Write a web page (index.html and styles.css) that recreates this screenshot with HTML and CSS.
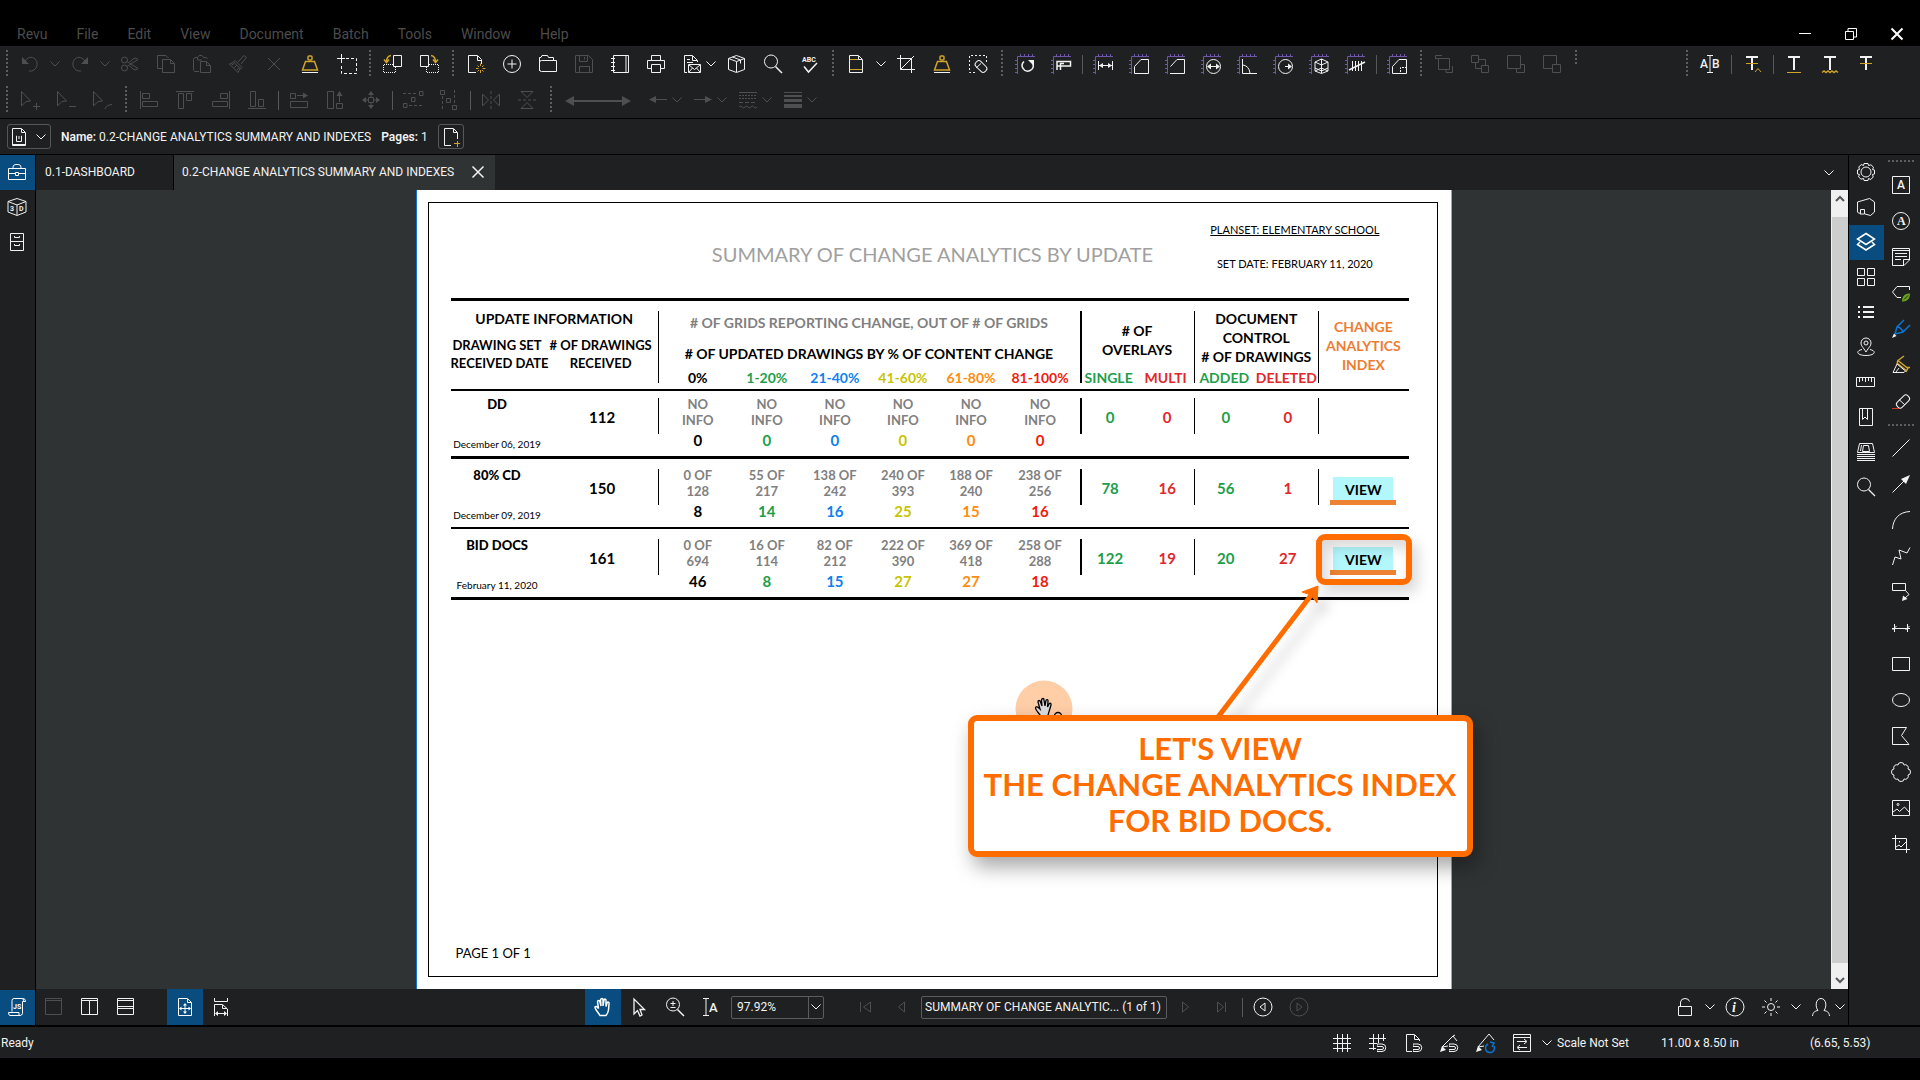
FILE: index.html
```html
<!DOCTYPE html>
<html lang="en">
<head>
<meta charset="utf-8">
<title>Revu - 0.2-CHANGE ANALYTICS SUMMARY AND INDEXES</title>
<link rel="stylesheet" href="styles.css">
</head>
<body>
<svg class="defs" aria-hidden="true">
  <symbol id="chev" viewBox="0 0 10 6"><path d="M.5.5 5 5 9.5.5"/></symbol>
  <symbol id="ruler" viewBox="0 0 20 20"><path d="M2.5 20V2.5H20M5.5 2V0M9.5 2V0M13.5 2V0M17.5 2V0M2 6.5H0M2 10.5H0M2 14.5H0M2 18.5H0"/></symbol>
  <symbol id="magnet" viewBox="0 0 10 10"><path d="M0 1H5A3.5 3.5 0 0 1 5 8.500H0V6.500H5A1.500 1.500 0 0 0 5 3.500H0Z"/></symbol>
</svg>
<div class="app">
  <header class="titlebar">
    <nav class="menu" aria-label="Main menu">
      <button>Revu</button><button>File</button><button>Edit</button><button>View</button><button>Document</button><button>Batch</button><button>Tools</button><button>Window</button><button>Help</button>
    </nav>
    <div class="window-buttons">
      <button aria-label="Minimize"><svg class="ic"><path d="M4 9.500H16"/></svg></button>
      <button aria-label="Restore"><svg class="ic"><path d="M4.500 7.500H12.500V15.500H4.500ZM7 7V4.500H15.500V13H13"/></svg></button>
      <button aria-label="Close"><svg class="ic thick"><path d="M4.500 4.500 15.500 15.500M15.500 4.500 4.500 15.500"/></svg></button>
    </div>
  </header>

  <div class="toolbars">
    <div class="toolbar" role="toolbar" aria-label="Standard">
      <i class="grip lead"></i>
      <button class="tb off" aria-label="Undo"><svg class="ic"><path d="M5 7.500C7 3 12 2 15 5S18 13 14 16Q12 17.500 9 17"/><path class="fill" d="M2 3V10H9Z"/></svg></button>
      <button class="chev off" aria-label="Undo history"><svg><use href="#chev"/></svg></button>
      <button class="tb off" aria-label="Redo"><svg class="ic"><path d="M15 7.500C13 3 8 2 5 5S2 13 6 16Q8 17.500 11 17"/><path class="fill" d="M18 3V10H11Z"/></svg></button>
      <button class="chev off" aria-label="Redo history"><svg><use href="#chev"/></svg></button>
      <button class="tb off" aria-label="Cut"><svg class="ic"><circle cx="4.500" cy="6" r="3"/><circle cx="4.500" cy="14" r="3"/><path d="M7 7.500 18 14.500Q16 17 13 15L10 12M7 12.500 18 5.500Q16 3 13 5L10 8"/></svg></button>
      <button class="tb off" aria-label="Copy"><svg class="ic"><path d="M6 14.500H1.500V1.500H10L12.500 4M6.500 5.500H14.500L18.500 9.500V18.500H6.500ZM14.500 6V9.500H18"/></svg></button>
      <button class="tb off" aria-label="Paste"><svg class="ic"><path d="M7 17.500H2.500Q1.500 17 1.500 15.500V5.500Q1.500 3.500 4 3.500H5.500L7 1.500H10L11.500 3.500H13Q15 3.500 15.500 5M5.500 3.500V6H10M8.500 7.500H14.500L18.500 11.500V18.500H8.500ZM14.500 8V11.500H18"/></svg></button>
      <button class="tb off" aria-label="Format painter"><svg class="ic"><path d="M10 8 16 1.500 18.500 3.500 13 10M7 6.500 14 13.500 12.500 15 5.500 8ZM5 8.500 1.500 10 10 18.500 12 15M4 11 6 9.500M6.500 13.500 9 11M9 16 11 13.500"/></svg></button>
      <button class="tb off" aria-label="Delete"><svg class="ic"><path d="M4 4 16 16M16 4 4 16"/></svg></button>
      <button class="tb" aria-label="Weight"><svg class="ic"><g class="gold"><path stroke-width="1.500" d="M5.500 7.500H14.500L17.500 16H2.500Z"/><rect x="8" y="2" width="4" height="4" rx="1" stroke-width="1.500"/></g><path d="M2 18.500H18"/></svg></button>
      <button class="tb" aria-label="Select region"><svg class="ic"><path d="M5.500 0V9M1 4.500H9"/><path stroke-dasharray="3 2" d="M10 4.500H20.500V19.500H5.500V10"/></svg></button>
      <i class="grip"></i>
      <button class="tb" aria-label="Rotate counterclockwise"><svg class="ic"><path d="M10.500 1.500H18.500V12.500H10.500Z"/><path stroke-dasharray="1 1" d="M10 10.500H.5V18.500H12.500V13"/><path class="gold" stroke-width="1.500" d="M8 1.500C5 2 3.500 4 3.500 8M1 5.500 3.500 8.500 6 5.500"/></svg></button>
      <button class="tb" aria-label="Rotate clockwise"><svg class="ic"><path d="M1.500 1.500H9.500V12.500H1.500Z"/><path stroke-dasharray="1 1" d="M10 10.500H19.500V18.500H7.500V13"/><path class="gold" stroke-width="1.500" d="M12 1.500C15 2 16.500 4 16.500 8M14 5.500 16.500 8.500 19 5.500"/></svg></button>
      <i class="grip"></i>
      <button class="tb" aria-label="New PDF"><svg class="ic"><path d="M10 18.500H2.500V1.500H11.500L15.500 5.500V10M11.500 2V6.500H15.500"/><path class="gold" d="M14.500 9.500V12M14.500 16V19M10 14.500H12.500M16.500 14.500H19.500M11.500 11.500 13 13M17.500 11.500 16 13M11.500 17.500 13 16M17.500 17.500 16 16"/></svg></button>
      <button class="tb" aria-label="Create"><svg class="ic"><circle cx="10" cy="10" r="8.500"/><path d="M10 5.500V14.500M5.500 10H14.500"/></svg></button>
      <button class="tb" aria-label="Open"><svg class="ic"><path d="M1.500 17V3.500H3L4 1.500H9.500L10.500 3.500H15.500V6.500M1.500 8.500Q1.500 6.500 3.500 6.500H18.500V17.500H3.500Q1.500 17.500 1.500 15.500"/></svg></button>
      <button class="tb off" aria-label="Save"><svg class="ic"><path d="M1.500 1.500H14.500L18.500 5.500V18.500H1.500ZM5.500 1.500V7.500H13.500V1.500M10.500 3V5.500M5.500 18V12.500H15.500V18"/></svg></button>
      <button class="tb" aria-label="Notebook"><svg class="ic"><path d="M3.500 1.500H18.500V18.500H3.500ZM16 2V18"/><path d="M1 4.500H5M1 8.500H5M1 12.500H5M1 16.500H5"/></svg></button>
      <button class="tb" aria-label="Print"><svg class="ic"><path d="M5.500 6V1.500H14.500V6M5 14.500H1.500V6.500H18.500V14.500H15M5.500 10.500H14.500V18.500H5.500Z"/></svg></button>
      <button class="tb" aria-label="Email PDF"><svg class="ic"><path d="M5 18.500H2.500V1.500H10.500L15.500 6.500V8M10.500 2V6.500H15M5 5.500H8M5 8.500H11M6.500 10.500H18.500V18.500H6.500ZM7 11 12.500 15.500 18 11M7 18 10.500 14M18 18 14.500 14"/></svg></button>
      <button class="chev tight" aria-label="Email options"><svg><use href="#chev"/></svg></button>
      <button class="tb" aria-label="Package"><svg class="ic"><path d="M9.500 1.500 17.500 4.500V15.500L9.500 18.500 1.500 15.500V4.500ZM1.500 4.500 9.500 7.500 17.500 4.500M9.500 7.500V18M5.500 3 13.500 6V9.500"/></svg></button>
      <button class="tb" aria-label="Search"><svg class="ic"><circle cx="8" cy="7.500" r="6.500"/><path stroke-width="1.500" d="M12.500 12.500 19 19"/></svg></button>
      <button class="tb" aria-label="Check spelling"><svg class="ic"><text class="glyph" x="3" y="8" font-size="7">ABC</text><path stroke-width="1.500" d="M5 12.500 9.500 18 18 9"/></svg></button>
      <i class="grip"></i>
      <button class="tb" aria-label="Page setup"><svg class="ic"><path d="M3.500 1.500H12.500L16.500 5.500V18.500H3.500ZM12.500 2V5.500H16"/><path class="gold" d="M4 5.500H12M4 15.500H16"/></svg></button>
      <button class="chev" aria-label="Page setup options"><svg><use href="#chev"/></svg></button>
      <button class="tb" aria-label="Crop"><svg class="ic"><path d="M4.500 1V15.500H19M1 4.500H15.500V19M4.500 15.500 18 2"/></svg></button>
      <button class="tb" aria-label="Flatten"><svg class="ic"><g class="gold"><path stroke-width="1.500" d="M5.500 7.500H14.500L17.500 16H2.500Z"/><rect x="8" y="2" width="4" height="4" rx="1" stroke-width="1.500"/></g><path d="M2 18.500H18"/></svg></button>
      <button class="tb" aria-label="Erase content"><svg class="ic"><path stroke-dasharray="2 2" d="M7 18.500H1.500V1.500H18.500V8"/><rect x="6.500" y="9" width="13" height="7" rx="3" transform="rotate(45 13 12.500)"/><path d="M8 14 13 9.500"/></svg></button>
      <i class="grip"></i>
      <button class="tb" aria-label="Calibrate"><svg class="ic"><use class="purple" href="#ruler"/><path stroke-width="1.500" d="M9 7.500A5.500 5.500 0 1 0 18 10"/><path class="fill" d="M13 6H19V12Z"/></svg></button>
      <button class="tb" aria-label="Measure tool"><svg class="ic"><use class="purple" href="#ruler"/><path stroke-width="1.500" d="M6 16V7.500H19.500V12H6M9.500 16V9.500H13"/></svg></button>
      <i class="sep"></i>
      <button class="tb" aria-label="Length"><svg class="ic"><use class="purple" href="#ruler"/><path d="M5.500 7V16M19.500 7V16M6 11.500H19"/><path class="fill" d="M6 11.500 10 9V14ZM19 11.500 15 9V14Z"/></svg></button>
      <button class="tb" aria-label="Area"><svg class="ic"><use class="purple" href="#ruler"/><path d="M5.500 19.500V12.500L12 5.500H19.500V19.500Z"/></svg></button>
      <button class="tb" aria-label="Polylength"><svg class="ic"><use class="purple" href="#ruler"/><path d="M5.500 12.500 12 5.500H19.500V19.500H5"/></svg></button>
      <button class="tb" aria-label="Diameter"><svg class="ic"><use class="purple" href="#ruler"/><circle cx="12.500" cy="12.500" r="7"/><path d="M7 12.500H18"/><path class="fill" d="M6 12.500 10 9.500V15.500ZM19 12.500 15 9.500V15.500Z"/></svg></button>
      <button class="tb" aria-label="Angle"><svg class="ic"><use class="purple" href="#ruler"/><path d="M5.500 5V19.500H20M6 11Q12 12 13 19"/></svg></button>
      <button class="tb" aria-label="Radius"><svg class="ic"><use class="purple" href="#ruler"/><circle cx="12.500" cy="12.500" r="7"/><path d="M12 12.500H18"/><path class="fill" d="M19 12.500 15 9.500V15.500Z"/></svg></button>
      <button class="tb" aria-label="Volume"><svg class="ic"><use class="purple" href="#ruler"/><path d="M12.500 5 19 8V17L12.500 19.500 6 17V8ZM6 8 12.500 11 19 8M12.500 5V19M6 14 12.500 17 19 14M6 17 12.500 14 19 17"/></svg></button>
      <button class="tb" aria-label="Count"><svg class="ic"><use class="purple" href="#ruler"/><path d="M7.500 7V17M10.500 7V17M13.500 7V17M16.500 7V17"/><path stroke-width="1.500" d="M4 16 20 8"/></svg></button>
      <i class="sep"></i>
      <button class="tb" aria-label="Cutout"><svg class="ic"><use class="purple" href="#ruler"/><path d="M5.500 19.500V12.500L12 5.500H19.500V19.500Z"/><path stroke-dasharray="2 1" d="M13.500 18V13.500H19"/></svg></button>
      <i class="grip"></i>
      <button class="tb off" aria-label="Bring to front"><svg class="ic"><path d="M4.500 4.500H15.500V15.500H4.500ZM1.500 5V1.500H8M1 4.500H4M15 18.500H18.500V12M12 16V18.500H18"/></svg></button>
      <button class="tb off" aria-label="Bring forward"><svg class="ic"><path d="M1.500 1.500H8.500V8.500H1.500ZM11.500 11.500H18.500V18.500H11.500ZM9 5.500H15.500V11M5.500 9V14.500H11"/></svg></button>
      <button class="tb off" aria-label="Send to back"><svg class="ic"><path d="M1.500 1.500H14.500V14.500H1.500ZM15 10.500H18.500V18.500H10.500V15"/></svg></button>
      <button class="tb off" aria-label="Send backward"><svg class="ic"><path d="M10 14.500H1.500V1.500H14.500V10M10.500 10.500H18.500V18.500H10.500Z"/></svg></button>
      <i class="grip short"></i>
      <i class="spring"></i>
      <i class="grip"></i>
      <button class="tb" aria-label="Edit text"><svg class="ic"><text class="glyph thin" x="0" y="14" font-size="12">A</text><text class="glyph thin" x="12" y="14" font-size="12">B</text><path d="M7 1.500H13M10 2V18M7 18.500H13"/></svg></button>
      <i class="sep"></i>
      <button class="tb" aria-label="Review text"><svg class="ic"><path stroke-width="2" d="M4 3H16M10 3V16"/><path class="gold" d="M4 9.500H16M13 18 16 14.500 19 18"/></svg></button>
      <i class="sep"></i>
      <button class="tb" aria-label="Underline text"><svg class="ic"><path stroke-width="2" d="M4 3H16M10 3V16"/><path class="gold" d="M3 18.500H17"/></svg></button>
      <button class="tb" aria-label="Squiggly text"><svg class="ic"><path stroke-width="2" d="M4 3H16M10 3V16"/><path class="gold" stroke-width="1.500" d="M2 18.500 4 17 6 18.500 8 17 10 18.500 12 17 14 18.500 16 17 18 18.500"/></svg></button>
      <button class="tb" aria-label="Strikethrough text"><svg class="ic"><path stroke-width="2" d="M4 3H16M10 3V16"/><path class="gold" d="M4 9.500H16"/></svg></button>
      <i class="endpad"></i>
    </div>

    <div class="toolbar off" role="toolbar" aria-label="Arrange">
      <i class="grip lead"></i>
      <button class="tb" aria-label="Add point"><svg class="ic"><path d="M1.500 1.500 10.500 11 6 11.500 1.500 16ZM13 16.500H20M16.500 13V20"/></svg></button>
      <button class="tb" aria-label="Remove point"><svg class="ic"><path d="M1.500 1.500 10.500 11 6 11.500 1.500 16ZM13 16.500H20"/></svg></button>
      <button class="tb" aria-label="Curve point"><svg class="ic"><path d="M1.500 1.500 10.500 11 6 11.500 1.500 16ZM13 19Q14 15 20 14.500"/></svg></button>
      <i class="grip"></i>
      <button class="tb" aria-label="Align left"><svg class="ic"><path d="M1.500 1V19M3.500 3.500H10.500V8.500H3.500ZM3.500 11.500H18.500V16.500H3.500Z"/></svg></button>
      <button class="tb" aria-label="Align top"><svg class="ic"><path d="M1 1.500H19M3.500 3.500H8.500V18.500H3.500ZM11.500 3.500H16.500V10.500H11.500Z"/></svg></button>
      <button class="tb" aria-label="Align right"><svg class="ic"><path d="M18.500 1V19M9.500 3.500H16.500V8.500H9.500ZM1.500 11.500H16.500V16.500H1.500Z"/></svg></button>
      <button class="tb" aria-label="Align bottom"><svg class="ic"><path d="M1 18.500H19M3.500 1.500H8.500V16.500H3.500ZM11.500 9.500H16.500V16.500H11.500Z"/></svg></button>
      <i class="sep"></i>
      <button class="tb" aria-label="Match width"><svg class="ic"><path d="M1.500 3.500H6.500V8.500H1.500ZM1.500 11.500H18.500V17.500H1.500ZM8 5.500H16"/><path class="fill" d="M19 5.500 14 2.500V8.500Z"/></svg></button>
      <button class="tb" aria-label="Match height"><svg class="ic"><path d="M2.500 1.500H8.500V18.500H2.500ZM11.500 13.500H17.500V18.500H11.500ZM14.500 4V12"/><path class="fill" d="M14.500 1 11.500 6H17.500Z"/></svg></button>
      <button class="tb" aria-label="Match size"><svg class="ic"><path d="M7.500 7.500H12.500V12.500H7.500ZM10 2V7M10 13V18M2 10H7M13 10H18"/><path class="fill" d="M10 1 7 5H13ZM10 19 7 15H13ZM1 10 5 7V13ZM19 10 15 7V13Z"/></svg></button>
      <i class="sep"></i>
      <button class="tb" aria-label="Distribute horizontally"><svg class="ic"><path d="M16.500 1.500H20V5.500H16.500ZM8.500 7.500H12V11.500H8.500ZM.5 13.500H4V17.500H.5Z"/><path stroke-dasharray="3 2" d="M0 3.500H15M6 15.500H20"/></svg></button>
      <button class="tb" aria-label="Distribute vertically"><svg class="ic"><path d="M1.500 .5H5.500V4.500H1.500ZM7.500 8.500H11.500V12.500H7.500ZM13.500 15.500H17.500V19.500H13.500Z"/><path stroke-dasharray="3 2" d="M3.500 6V20M15.500 0V14"/></svg></button>
      <i class="sep"></i>
      <button class="tb" aria-label="Flip horizontal"><svg class="ic"><path d="M1.500 4 7.500 10 1.500 16ZM18.500 4 12.500 10 18.500 16Z"/><path stroke-dasharray="3 2" d="M10 1V19"/></svg></button>
      <button class="tb" aria-label="Flip vertical"><svg class="ic"><path d="M4 1.500H16L10 7.500ZM4 18.500H16L10 12.500Z"/><path stroke-dasharray="3 2" d="M1 10H19"/></svg></button>
      <i class="grip"></i>
      <button class="tb line" aria-label="Line sample"><svg class="ic wide"><path stroke-width="2" d="M6 11H60"/><path class="fill" d="M0 11 9 6V16ZM66 11 57 6V16Z"/></svg></button>
      <button class="tb" aria-label="Line start"><svg class="ic"><path d="M6 9.500H19"/><path class="fill" d="M1 9.500 8 6V13Z"/></svg></button>
      <button class="chev tight" aria-label="Line start options"><svg><use href="#chev"/></svg></button>
      <button class="tb" aria-label="Line end"><svg class="ic"><path d="M1 9.500H14"/><path class="fill" d="M19 9.500 12 6V13Z"/></svg></button>
      <button class="chev tight" aria-label="Line end options"><svg><use href="#chev"/></svg></button>
      <button class="tb" aria-label="Line style"><svg class="ic"><path d="M1 2.500H19M1 17Q2.500 15 4 17T7 17T10 17T13 17T16 17T19 17"/><path stroke-dasharray="2 1" d="M1 5.500H19M1 8.500H19"/><path stroke-dasharray="4 2" d="M1 12.500H19"/></svg></button>
      <button class="chev tight" aria-label="Line style options"><svg><use href="#chev"/></svg></button>
      <button class="tb" aria-label="Line width"><svg class="ic"><path d="M1 2.500H19"/><path stroke-width="2" d="M1 6H19"/><path stroke-width="3" d="M1 10.500H19"/><path stroke-width="4" d="M1 16H19"/></svg></button>
      <button class="chev tight" aria-label="Line width options"><svg><use href="#chev"/></svg></button>
    </div>
  </div>

  <div class="infobar">
    <button class="boxed docmenu" aria-label="Document menu"><svg class="ic"><path d="M3.500 1.500H12.500L16.500 5.500V18.500H3.500ZM12.500 2V5.500H16M8 9H7.500V14.500H12.500V9H12M10 9V12M3 17.500H17"/></svg><svg class="ch"><use href="#chev"/></svg></button>
    <p class="info"><b>Name:</b> 0.2-CHANGE ANALYTICS SUMMARY AND INDEXES</p>
    <p class="info pages"><b>Pages:</b> 1</p>
    <button class="boxed" aria-label="Add page"><svg class="ic"><path d="M10 18.500H3.500V1.500H12.500L16.500 5.500V12M12.500 2V5.500H16"/><path class="gold" d="M13 16.500H19M16.500 14V20"/></svg></button>
  </div>

  <div class="middle">
    <aside class="rail" aria-label="Left panels">
      <button class="on" aria-label="Tool chest"><svg class="ic"><path d="M1.500 6.500H18.500V17.500H1.500ZM6 6C6 3 7 2.500 10 2.500S14 3 14 6M1.500 11.500H8M12 11.500H18M8.500 10.500H11.500V13.500H8.500Z"/></svg></button>
      <button aria-label="3D model"><svg class="ic"><path d="M10 1.500 19 4.500V15L10 18.500 1 15V4.500ZM1 4.500 10 8 19 4.500M10 8V18"/><text class="glyph" x="3" y="14" font-size="7">3</text><text class="glyph" x="12" y="14" font-size="7">D</text></svg></button>
      <button aria-label="File access"><svg class="ic"><path d="M3.500 1.500H16.500V18.500H3.500ZM4 9.500H16M7.500 4V5.500H12.500V4M7.500 12V13.500H12.500V12"/></svg></button>
      <button class="on last" aria-label="JavaScript"><svg class="ic"><path d="M16.500 5V3.500Q16.500 1.500 15 1.500H7Q5 1.500 5 3.500V14.500M16 1.500Q18.500 1.500 18.500 4.500H15.500V16.500Q15 18.500 13 18.500H3Q1.500 18.500 1.500 15.500H12V18"/><text class="glyph" x="6" y="12" font-size="7">JS</text></svg></button>
    </aside>

    <main class="workspace">
      <div class="tabs" role="tablist">
        <button class="tab first" role="tab" aria-selected="false">0.1-DASHBOARD</button>
        <div class="tab active"><button role="tab" aria-selected="true">0.2-CHANGE ANALYTICS SUMMARY AND INDEXES</button><button class="close" aria-label="Close tab"><svg class="ic"><path stroke-width="1.500" d="M4.500 4.500 15.500 15.500M15.500 4.500 4.500 15.500"/></svg></button></div>
        <button class="chev tablist" aria-label="All tabs"><svg><use href="#chev"/></svg></button>
      </div>

      <div class="view">
        <div class="canvas">
          <article class="sheet">
            <div class="frame">
              <header class="head">
                <h1>SUMMARY OF CHANGE ANALYTICS BY UPDATE</h1>
                <div class="meta"><p><u>PLANSET: ELEMENTARY SCHOOL</u></p><p>SET DATE: FEBRUARY 11, 2020</p></div>
              </header>
              <table class="data">
                <colgroup><col class="c-set"><col class="c-num"><col class="c-edge"><col class="c-g"><col class="c-g"><col class="c-g"><col class="c-g"><col class="c-edge"><col class="c-o"><col class="c-o"><col class="c-a"><col class="c-d"><col class="c-v"></colgroup>
                <thead>
                  <tr class="h1row">
                    <th colspan="2" class="big head-left">UPDATE INFORMATION</th>
                    <th colspan="6" rowspan="2" class="big bar-t two"><span class="grey"># OF GRIDS REPORTING CHANGE, OUT OF # OF GRIDS</span><span># OF UPDATED DRAWINGS BY % OF CONTENT CHANGE</span></th>
                    <th colspan="2" rowspan="2" class="big bar-t w2 low"># OF<br>OVERLAYS</th>
                    <th colspan="2" rowspan="2" class="big bar-t mid-low">DOCUMENT<br>CONTROL<br># OF DRAWINGS</th>
                    <th rowspan="3" class="big bar-f orange">CHANGE<br>ANALYTICS<br>INDEX</th>
                  </tr>
                  <tr class="h2row"><th rowspan="2" class="mid">DRAWING SET<br>RECEIVED DATE</th><th rowspan="2" class="mid"># OF DRAWINGS<br>RECEIVED</th></tr>
                  <tr class="h3row">
                    <th class="bar-b k0">0%</th><th class="k1">1-20%</th><th class="k2">21-40%</th><th class="k3">41-60%</th><th class="k4">61-80%</th><th class="k5">81-100%</th>
                    <th class="bar-b w2 green">SINGLE</th><th class="red">MULTI</th><th class="bar-b green">ADDED</th><th class="red">DELETED</th>
                  </tr>
                </thead>
                <tbody>
                  <tr class="thick-rule top">
                    <td><b>DD</b><time>December 06, 2019</time></td><td class="n">112</td>
                    <td class="bar k0"><span>NO<br>INFO</span>0</td><td class="k1"><span>NO<br>INFO</span>0</td><td class="k2"><span>NO<br>INFO</span>0</td><td class="k3"><span>NO<br>INFO</span>0</td><td class="k4"><span>NO<br>INFO</span>0</td><td class="k5"><span>NO<br>INFO</span>0</td>
                    <td class="n bar w2 green">0</td><td class="n red">0</td><td class="n bar green">0</td><td class="n red">0</td><td class="bar"></td>
                  </tr>
                  <tr>
                    <td><b>80% CD</b><time>December 09, 2019</time></td><td class="n">150</td>
                    <td class="bar k0"><span>0 OF<br>128</span>8</td><td class="k1"><span>55 OF<br>217</span>14</td><td class="k2"><span>138 OF<br>242</span>16</td><td class="k3"><span>240 OF<br>393</span>25</td><td class="k4"><span>188 OF<br>240</span>15</td><td class="k5"><span>238 OF<br>256</span>16</td>
                    <td class="n bar w2 green">78</td><td class="n red">16</td><td class="n bar green">56</td><td class="n red">1</td><td class="bar"><a class="go" href="#cd80">VIEW</a></td>
                  </tr>
                  <tr class="thick-rule">
                    <td><b>BID DOCS</b><time>February 11, 2020</time></td><td class="n">161</td>
                    <td class="bar k0"><span>0 OF<br>694</span>46</td><td class="k1"><span>16 OF<br>114</span>8</td><td class="k2"><span>82 OF<br>212</span>15</td><td class="k3"><span>222 OF<br>390</span>27</td><td class="k4"><span>369 OF<br>418</span>27</td><td class="k5"><span>258 OF<br>288</span>18</td>
                    <td class="n bar w2 green">122</td><td class="n red">19</td><td class="n bar green">20</td><td class="n red">27</td><td><a class="go" href="#bid">VIEW</a></td>
                  </tr>
                </tbody>
              </table>
              <footer class="foot">PAGE 1 OF 1</footer>
            </div>
            <div class="ring"></div>
            <svg class="pointer" width="58" height="58"><circle cx="29" cy="29" r="28.500" fill="#ffcda6"/><path d="M25 35C22 31 20 29 20.500 27.500S23 27 25 29L23 22C23 20 25 20 25.500 22L27 26 26.500 20C27 18 29 18 29 20L30 26 31 20.500C31.500 19 33.500 19.500 33 21.500L32.500 27 34 24C35 22.500 36.500 23.500 36 25L33 35V38H26Z" fill="#ddd" stroke="#000" stroke-width="1.300"/><circle cx="43" cy="36" r="3.500" fill="none" stroke="#000" stroke-width="1.500"/></svg>
            <svg class="arrow" width="112" height="138"><path d="M4 136 98 13" stroke="#ff6d00" stroke-width="5"/><path d="M104 5 88 11 97 14 103 22Z" fill="#ff6d00" stroke="#ff6d00" stroke-width="1"/></svg>
            <div class="callout">LET'S VIEW<br>THE CHANGE ANALYTICS INDEX<br>FOR BID DOCS.</div>
          </article>
        </div>
        <div class="scroll" aria-hidden="true"><svg class="up"><path d="M5 8 9 4 13 8"/></svg><i class="thumb"></i><svg class="down"><path d="M5 4 9 8 13 4"/></svg></div>
      </div>

      <div class="navbar">
        <div class="nav-group">
          <button class="tb off" aria-label="Single view"><svg class="ic"><path d="M1.500 1.500H17.500V17.500H1.500ZM2 3.500H17"/></svg></button>
          <button class="tb" aria-label="Split vertical"><svg class="ic"><path d="M1.500 1.500H17.500V17.500H1.500ZM2 3.500H17M9.500 4V17"/></svg></button>
          <button class="tb" aria-label="Split horizontal"><svg class="ic"><path d="M1.500 1.500H17.500V17.500H1.500ZM2 3.500H17M2 9.500H17M2 11.500H17"/></svg></button>
          <button class="tb on gap" aria-label="Fit page"><svg class="ic"><path d="M3.500 1.500H12.500L16.500 5.500V18.500H3.500ZM12.500 2V5.500H16M10 7V16M5 11.500H15"/><path class="fill" d="M10 6 8 8.500H12ZM10 17 8 14.500H12ZM4 11.500 6.500 9.500V13.500ZM16 11.500 13.500 9.500V13.500Z"/></svg></button>
          <button class="tb" aria-label="Fit width"><svg class="ic"><path d="M3.500 1V4.500H16.500V1M3.500 19V7.500H11.500L16.500 12V19M11.500 8V11.500H16M5 16.500H15"/><path class="fill" d="M4 16.500 7 14V19ZM16 16.500 13 14V19Z"/></svg></button>
        </div>
        <div class="nav-group center">
          <button class="tb on" aria-label="Pan"><svg class="ic"><path stroke-width="1.500" d="M7 18.500C5 15 2 12 2 10.500S4 9 5.500 11.500L4.500 5C4.500 3 6.500 3 7 5L8 9 7.500 3C8 1 10 1 10 3V9L11 3C11.500 1.500 13.500 2 13 4V9.500L14 6C15 4.500 16.500 5 16 7L15.500 13Q15 16 13 18.500Z"/></svg></button>
          <button class="tb" aria-label="Select"><svg class="ic"><path stroke-width="1.300" d="M5 2V17L8.500 13.500 11 19 13 18 11 12.500H15.500Z"/></svg></button>
          <button class="tb" aria-label="Zoom"><svg class="ic"><circle cx="8" cy="7.500" r="6.500"/><path d="M8 4V9M5.500 6.500H10.500M5.500 10.500H10.500"/><path stroke-width="1.500" d="M12.500 12.500 19 19"/></svg></button>
          <button class="tb" aria-label="Select text"><svg class="ic"><path d="M2 1.500H8M5 2V18M2 18.500H8"/><text class="glyph thin" x="8" y="15" font-size="13">A</text></svg></button>
          <div class="field zoom"><input aria-label="Zoom level" value="97.92%"><button aria-label="Zoom levels"><svg class="ch"><use href="#chev"/></svg></button></div>
          <button class="tb off first-page" aria-label="First page"><svg class="ic"><path d="M4.500 5V15M14.500 5 7.500 10 14.500 15Z"/></svg></button>
          <button class="tb off" aria-label="Previous page"><svg class="ic"><path d="M12.500 5 6.500 10 12.500 15Z"/></svg></button>
          <input class="field page-name" aria-label="Page" value="SUMMARY OF CHANGE ANALYTIC... (1 of 1)">
          <button class="tb off" aria-label="Next page"><svg class="ic"><path d="M7.500 5 13.500 10 7.500 15Z"/></svg></button>
          <button class="tb off" aria-label="Last page"><svg class="ic"><path d="M14.500 5V15M6.500 5 12.500 10 6.500 15Z"/></svg></button>
          <i class="sep"></i>
          <button class="tb" aria-label="Previous view"><svg class="ic"><circle cx="10" cy="10" r="9"/><path d="M12 6 7 10 12 14Z"/></svg></button>
          <button class="tb off" aria-label="Next view"><svg class="ic"><circle cx="10" cy="10" r="9"/><path d="M8 6 13 10 8 14Z"/></svg></button>
        </div>
        <div class="nav-group right">
          <button class="tb" aria-label="Security"><svg class="ic"><path d="M3.500 9.500H16.500V18.500H3.500ZM5.500 9V5Q6 1.500 10 1.500T14.500 4.500"/></svg></button>
          <button class="chev" aria-label="Security options"><svg><use href="#chev"/></svg></button>
          <button class="tb" aria-label="Information"><svg class="ic"><circle cx="10" cy="10" r="9"/><text class="glyph info-i" x="7" y="15" font-size="14">i</text></svg></button>
          <button class="tb" aria-label="Brightness"><svg class="ic"><circle cx="10" cy="10" r="3.500"/><path d="M10 1V4M10 16V19M1 10H4M16 10H19M3.500 3.500 5.500 5.500M16.500 3.500 14.500 5.500M3.500 16.500 5.500 14.500M16.500 16.500 14.500 14.500"/></svg></button>
          <button class="chev" aria-label="Brightness options"><svg><use href="#chev"/></svg></button>
          <button class="tb" aria-label="Account"><svg class="ic"><path d="M1.500 19C2 15 4 14 7 13.500 4 10 4.500 1.500 10 1.500S16 10 13 13.500C16 14 18 15 18.500 19"/></svg></button>
          <button class="chev tight" aria-label="Account options"><svg><use href="#chev"/></svg></button>
        </div>
      </div>
    </main>

    <aside class="rail right" aria-label="Right panels">
      <button aria-label="Properties"><svg class="ic"><path d="M8 1.500H12L12.500 3.500 15 2.800 17.500 5.200 16.500 7.500 18.500 8V12L16.500 12.500 17.200 15 14.800 17.500 12.500 16.500 12 18.500H8L7.500 16.500 5 17.200 2.500 14.800 3.500 12.500 1.500 12V8L3.500 7.500 2.800 5 5.200 2.500 7.500 3.500Z"/><circle cx="10" cy="10" r="5"/></svg></button>
      <button aria-label="Spaces"><svg class="ic"><path d="M1.500 15V5L13.500 1.500 18.500 5V15L14.500 18.500 9 17M1.500 15.500 4.500 16.500V12.500H8.500V17H4"/></svg></button>
      <button class="on" aria-label="Layers"><svg class="ic"><path stroke-width="1.500" d="M10 1.500 18.500 7 10 12.500 1.500 7ZM4 10 1.500 12.500 10 18 18.500 12.500 16 10"/></svg></button>
      <button aria-label="Thumbnails"><svg class="ic"><path d="M1.500 1.500H8.500V8.500H1.500ZM11.500 1.500H18.500V8.500H11.500ZM1.500 11.500H8.500V18.500H1.500ZM11.500 11.500H18.500V18.500H11.500Z"/></svg></button>
      <button aria-label="Bookmarks list"><svg class="ic"><path stroke-width="2" d="M2 5H4M2 10H4M2 15H4M7 5H18M7 10H18M7 15H18"/></svg></button>
      <button aria-label="Places"><svg class="ic"><path d="M10 15C7 10 5 9 5 6A5 5 0 0 1 15 6C15 9 13 10 10 15ZM6 12.500C-1 14 1 18.500 10 18.500S21 14 14 12.500"/><circle cx="10" cy="6" r="2"/></svg></button>
      <button aria-label="Measurements"><svg class="ic"><path d="M.5 5.500H18.500V14.500H.5ZM3.500 6V10M6.500 6V9M9.500 6V10M12.500 6V9M15.500 6V10"/></svg></button>
      <button aria-label="Bookmarks"><svg class="ic"><path d="M3.500 1.500H16.500V18.500H3.500ZM6.500 1.500V12.500L9 10 11.500 12.500V1.500"/></svg></button>
      <button aria-label="Sets"><svg class="ic"><path d="M3.500 1.500H16.500L18.500 10.500H1.500ZM7.500 3.500H12.500L13.500 9.500H6.500ZM5.500 3 4.500 9M1 12.500H19M1 14.500H19M1 16.500H19M1 18.500H19"/></svg></button>
      <button aria-label="Search panel"><svg class="ic"><circle cx="8" cy="7.500" r="6.500"/><path stroke-width="1.300" d="M12.500 12.500 19 19"/></svg></button>
    </aside>
    <aside class="tools" role="toolbar" aria-label="Markup tools">
      <i class="hgrip"></i>
      <button class="tb" aria-label="Text box"><svg class="ic"><path d="M1.500 1.500H18.500V18.500H1.500Z"/><text class="glyph thin" x="6" y="14" font-size="12">A</text></svg></button>
      <button class="tb" aria-label="Typewriter"><svg class="ic"><circle cx="10" cy="10" r="8.500"/><text class="glyph slab" x="6" y="14" font-size="12">A</text></svg></button>
      <button class="tb" aria-label="Note"><svg class="ic"><path d="M1.500 1.500H18.500V13L13 18.500H1.500ZM2 3.500H18M4 6.500H16M4 9.500H16M4 12.500H10M12.500 18V12.500H18"/></svg></button>
      <button class="tb" aria-label="Hyperlink"><svg class="ic"><path d="M18.500 7V3.500H6L1.500 9 6 14.500H10"/><path class="leaf" d="M11 18.500C11 13 14 10.500 19 10.500C19 16 16 18.500 11 18.500Z"/><path stroke="#1f2021" d="M13 16.500 17 12.500"/></svg></button>
      <button class="tb" aria-label="Pen"><svg class="ic"><path class="blue" stroke-width="1.500" d="M4 15 6 8 13 1M4 15 12 13 19 6M6 8Q10 8 12 13"/><path class="fill" d="M1 19 3 14.500 5.500 17Z"/></svg></button>
      <button class="tb" aria-label="Highlight"><svg class="ic"><path class="gold" stroke-width="1.500" d="M7 5.500 13 1M16 12.500H19M6 8 16 16M7 5.500 17 13.500M7 5 6 9M17 13 15 17"/><path d="M2 17.500 6 9 14.500 16 13 17.500ZM5 17 8 13"/></svg></button>
      <button class="tb" aria-label="Eraser"><svg class="ic"><rect x="4.500" y="7" width="15" height="7" rx="3" transform="rotate(-45 12 10.500)"/><path d="M8 8.500 14 14"/><path stroke="#d33a2c" d="M1 17.500H8"/></svg></button>
      <i class="hgrip"></i>
      <button class="tb" aria-label="Line"><svg class="ic"><path d="M1.500 18.500 18.500 1.500"/></svg></button>
      <button class="tb" aria-label="Arrow"><svg class="ic"><path d="M1.500 18.500 15 5"/><path class="fill" d="M19 1 10 5 15 10Z"/></svg></button>
      <button class="tb" aria-label="Arc"><svg class="ic"><path d="M1.500 19C2 9 8 2 19 1.500"/></svg></button>
      <button class="tb" aria-label="Polyline"><svg class="ic"><path d="M1.500 19 4 11 10 13 8 4 16 7 19 1.500"/></svg></button>
      <button class="tb" aria-label="Callout"><svg class="ic"><path d="M1.500 1.500H14.500V8.500H1.500ZM14.500 8.500 18 12.500 14 16"/><path class="fill" d="M11 19 12 13.500 16.500 17Z"/></svg></button>
      <button class="tb" aria-label="Dimension"><svg class="ic"><path d="M3.500 6V14M16.500 6V14M1 10.500H19M1.500 12 5.500 8M14.500 12 18.500 8"/></svg></button>
      <button class="tb" aria-label="Rectangle"><svg class="ic"><path d="M1.500 3.500H18.500V16.500H1.500Z"/></svg></button>
      <button class="tb" aria-label="Ellipse"><svg class="ic"><ellipse cx="10" cy="10" rx="8.500" ry="6.500"/></svg></button>
      <button class="tb" aria-label="Polygon"><svg class="ic"><path d="M1.500 1.500H15.500L10.500 9.500 18 18.500H1.500Z"/></svg></button>
      <button class="tb" aria-label="Cloud"><svg class="ic"><path d="M7 3A3 2.500 0 0 1 13 3 3 3 0 0 1 17 7 2.500 3 0 0 1 17 13 3 3 0 0 1 13 17 3 2.500 0 0 1 7 17 3 3 0 0 1 3 13 2.500 3 0 0 1 3 7 3 3 0 0 1 7 3Z"/></svg></button>
      <button class="tb" aria-label="Image"><svg class="ic"><path d="M1.500 2.500H18.500V17.500H1.500ZM2 14 6 11 8.500 13.500 13.500 9 18 14"/><circle cx="7" cy="6.500" r="1"/></svg></button>
      <button class="tb" aria-label="Snapshot"><svg class="ic"><path d="M4.500 1V15.500H19M1 4.500H15.500V19M5 13 8 11 10 13 15 8M8.500 7V8.500"/></svg></button>
    </aside>
  </div>

  <footer class="status">
    <span class="ready">Ready</span>
    <button class="tb" aria-label="Show grid"><svg class="ic"><path d="M5.500 1V19M10.500 1V19M15.500 1V19M1 5.500H19M1 10.500H19M1 15.500H19"/></svg></button>
    <button class="tb" aria-label="Snap to grid"><svg class="ic"><path d="M5.500 1V17M10.500 1V10M15.500 1V8M1 5.500H18M1 10.500H9M1 15.500H8"/><use href="#magnet" x="9" y="10" width="10" height="10"/></svg></button>
    <button class="tb" aria-label="Snap to content"><svg class="ic"><path d="M8 18.500H2.500V1.500H10.500L15.500 6.500V8M10.500 2V6.500H15"/><use href="#magnet" x="9" y="10" width="10" height="10"/></svg></button>
    <button class="tb" aria-label="Snap to markup"><svg class="ic"><path d="M2 14 13 3 17 8M13 3 15 2M2 14 8 13"/><path class="fill" d="M0 19 2 13 6 17Z"/><use href="#magnet" x="9" y="10" width="10" height="10"/></svg></button>
    <button class="tb" aria-label="Reuse"><svg class="ic"><path d="M2 14 13 1 18 7M2 14 8 13"/><path class="fill" d="M0 19 2 13 6 17Z"/><path class="blue" stroke-width="1.500" d="M12 11A4.500 4.500 0 1 0 18 13M14 9 18 10 16 14"/></svg></button>
    <button class="tb" aria-label="Sync views"><svg class="ic"><path d="M1.500 1.500H18.500V18.500H1.500ZM2 4.500H18M5 8.500H14M12 6 15 8.500 12 11M6 14.500H15M8 12 5 14.500 8 17"/></svg></button>
    <button class="chev" aria-label="Scale options"><svg><use href="#chev"/></svg></button>
    <span class="scale">Scale Not Set</span>
    <span class="size">11.00 x 8.50 in</span>
    <span class="pos">(6.65, 5.53)</span>
  </footer>
</div>
</body>
</html>
```
FILE: styles.css
```css
* { box-sizing: border-box; }
html, body { height: 100%; margin: 0; }
body { background: #000; color: #f2f2f2; font: 12px/16px Roboto, sans-serif; overflow: hidden; }
p, h1 { margin: 0; font-weight: 400; }
button, input { margin: 0; padding: 0; border: 0; background: none; color: inherit; font: inherit; }
button { display: flex; align-items: center; justify-content: center; flex: none; }
.defs { position: absolute; width: 0; height: 0; }

.app { display: flex; flex-direction: column; height: 100%; padding-bottom: 22px; }

/* icons */
svg { display: block; flex: none; fill: none; stroke: currentColor; }
.ic { width: 20px; height: 20px; overflow: visible; }
.ic.wide { width: 66px; }
.ic.thick { stroke-width: 2; }
.ic .fill { fill: currentColor; stroke: none; }
.gold { stroke: #cfa32c; }
.purple { stroke: #6e57a8; }
.blue { stroke: #0b74d1; }
.leaf { fill: #67a31c; stroke: none; }
.glyph { fill: currentColor; stroke: none; font-family: Roboto, sans-serif; font-weight: 700; }
.glyph.thin { font-weight: 500; }
.glyph.slab { font-family: "Liberation Serif", serif; }
.glyph.info-i { font-family: "Liberation Serif", serif; font-style: italic; }

/* title bar */
.titlebar { display: flex; justify-content: space-between; height: 46px; padding-top: 22px; }
.menu { display: flex; gap: 29px; padding-left: 17px; color: #4c4c4c; font-size: 14px; }
.window-buttons { display: flex; color: #fff; }
.window-buttons button { width: 46px; }

/* toolbars */
.toolbars { background: #1f2021; border-bottom: 1px solid #000; }
.toolbar { display: flex; height: 36px; }
.tb { width: 36px; height: 36px; }
.tb.line { width: 84px; }
.off { color: #4d4f50; }
.on { background: #084c80; color: #fff; }
.chev { width: 14px; }
.chev svg, .ch { width: 10px; height: 6px; }
.chev.tight { width: 17px; margin-left: -8px; }
.grip { flex: none; width: 11px; margin: 4px 0 6px; background: repeating-linear-gradient(#5c5e5f 0 2px, transparent 2px 4px) center / 2px 26px no-repeat; }
.grip.lead { width: 10px; margin-left: 2px; }
.grip.short { background-size: 2px 14px; background-position: center top; }
.hgrip { flex: none; height: 12px; width: 26px; background: repeating-linear-gradient(90deg, #5c5e5f 0 2px, transparent 2px 4px) center / 26px 2px no-repeat; }
.hgrip ~ .hgrip { height: 11px; }
.sep { flex: none; width: 6px; background: linear-gradient(#56585a, #56585a) center / 1px 19px no-repeat; }
.spring { flex: 1; }
.endpad { width: 36px; flex: none; }

/* document info */
.infobar { display: flex; align-items: center; height: 36px; padding-left: 7px; background: #1f2021; border-bottom: 1px solid #000; }
.boxed { width: 26px; height: 25px; border: 1px solid #555758; border-radius: 3px; }
.docmenu { width: 44px; gap: 7px; padding-right: 3px; }
.info { padding-left: 10px; }
.pages { margin-right: 10px; }
.info b { font-weight: 600; }

/* main area */
.middle { display: flex; flex: 1; min-height: 0; background: #1f2021; }
.rail { display: flex; flex-direction: column; flex: none; width: 36px; border-right: 1px solid #000; }
.rail button { width: 35px; height: 35px; padding: 0 1px 1px 0; }
.rail .last { margin-top: auto; }
.rail.right { border-right: 0; border-left: 1px solid #000; }
.tools { display: flex; flex-direction: column; align-items: center; flex: none; width: 36px; padding-right: 2px; }
.tools .tb { width: 34px; }
.workspace { display: flex; flex-direction: column; flex: 1; min-width: 0; }
.tabs { display: flex; height: 35px; }
.tab { display: flex; align-items: center; padding-bottom: 2px; }
.tab.first { width: 138px; justify-content: flex-start; padding-left: 9px; border-right: 1px solid #000; }
.tab.active { padding-left: 8px; background: #303334; }
.close { width: 34px; margin-left: 7px; }
.tablist { width: 38px; margin-left: auto; }

.view { display: flex; flex: 1; min-height: 0; }
.canvas { display: flex; justify-content: center; flex: 1; min-width: 0; overflow: hidden; background: #303334; }
.scroll { display: flex; flex-direction: column; flex: none; width: 17px; background: #f0f0f0; color: #55585a; }
.scroll svg { width: 17px; height: 18px; stroke-width: 2; padding-top: 3px; }
.scroll .up { height: 27px; }
.scroll .thumb { flex: 1; margin: 0 0 8px 1px; background: #cdcdcd; }

/* drawing sheet */
.sheet { position: relative; flex: none; width: 1036px; padding: 12px 13px 12px 11px; background: #fff; border: solid; border-width: 0 1px; border-color: #0b74d1 #4fc3e8 #0b74d1 #0b74d1; color: #000; font-family: Lato, sans-serif; }
.frame { display: flex; flex-direction: column; height: 100%; border: 1px solid #000; }
.head { display: grid; grid-template-columns: 1fr auto 1fr; height: 95px; flex: none; }
.head h1 { grid-column: 2; padding-top: 37px; color: #a0a0a0; font-size: 20px; line-height: 28px; }
.meta { padding-top: 17px; text-align: center; font-size: 11px; line-height: 20px; }
.meta p + p { margin-top: 14px; }
.foot { margin: auto 0 15px 27px; font-size: 13px; }

.data { width: 958px; margin-left: 22px; table-layout: fixed; border-collapse: separate; border-spacing: 0; border-top: 3px solid #000; text-align: center; }
.c-set { width: 93px; } .c-num { width: 114px; } .c-edge { width: 75px; } .c-g { width: 68px; } .c-o { width: 57px; } .c-a { width: 60px; } .c-d { width: 64px; } .c-v { width: 90px; }
.data th, .data td { padding: 0; font-weight: 700; white-space: nowrap; }
.h1row { height: 30px; } .h2row { height: 36px; } .h3row { height: 24px; }
.data .big { font-size: 14px; line-height: 19px; }
.data .head-left { padding-top: 4px; }
.data .low { padding-top: 12px; }
.data .mid-low { padding-top: 6px; }
.data .mid { vertical-align: top; padding-top: 5px; font-size: 13px; line-height: 18px; }
.h3row th { font-size: 14px; line-height: 20px; }
.data thead .mid, .h3row th, .data .bar-f { border-bottom: 2px solid #000; }
.data .two { padding-top: 6px; vertical-align: top; }
.two span { display: block; line-height: 24px; }
.two .grey { margin-bottom: 4px; line-height: 31px; }
.grey { color: #7f7f7f; }

.data td { height: 70px; padding-top: 8px; border-bottom: 2px solid #000; vertical-align: top; font-size: 15px; line-height: 20px; }
.data .thick-rule td { height: 71px; border-bottom-width: 3px; }
.data .top td { height: 68px; padding-top: 5px; }
.data td b { display: block; font-size: 13px; line-height: 16px; }
.data td time { display: block; margin-top: 25px; font-size: 10px; line-height: 14px; font-weight: 400; }
.data td span { display: block; margin-bottom: 2px; color: #808080; font-size: 13px; line-height: 16px; }
.data td.n { padding-top: 19px; padding-left: 3px; }
.data .top td.n { padding-top: 16px; }

/* column dividers */
.bar, .bar-t, .bar-b, .bar-f { --w: 1px; background: linear-gradient(#000, #000) left 10px / var(--w) 36px no-repeat; }
.top .bar { background-position: left 7px; }
.bar-t { background-size: var(--w) 100%; }
.bar-b { background-size: var(--w) 16px; background-position: left top; }
.bar-f { background-size: var(--w) 72px; }
.w2 { --w: 2px; }
.data .bar.k0, .data .bar-b.k0 { padding-left: 5px; }
.data .k5 { padding-right: 5px; }

.k1, .green { color: #1e9e4a; }
.k2 { color: #0f7ff0; }
.k3 { color: #c8c400; }
.k4 { color: #ff8c0a; }
.k5 { color: #f21b0c; }
.red { color: #e0282c; }
.orange { color: #ed7d31; }

.go { position: relative; display: block; width: 60px; height: 23px; margin: 10px auto 0; background: #b2f7fc; color: #000; font-size: 14px; line-height: 25px; text-decoration: none; }
.go::after { content: ""; position: absolute; left: -3px; right: -3px; top: 23px; height: 5px; background: #ed8233; }

/* annotation layer */
.ring, .callout { position: absolute; border: 6px solid #ff6d00; border-radius: 9px; }
.ring { left: 899px; top: 344px; width: 96px; height: 51px; box-shadow: 6px 8px 14px rgba(0, 0, 0, .15), inset 6px 8px 14px rgba(0, 0, 0, .15); }
.callout { left: 551px; top: 525px; width: 505px; height: 142px; padding-top: 9px; background: #fff; color: #ff6d00; font-size: 31px; line-height: 36px; font-weight: 700; text-align: center; white-space: nowrap; box-shadow: 5px 10px 20px rgba(0, 0, 0, .35); }
.arrow, .pointer { position: absolute; stroke: none; }
.arrow { left: 797px; top: 391px; filter: drop-shadow(9px 12px 6px rgba(0, 0, 0, .15)); }
.pointer { left: 598px; top: 490px; }

/* navigation bar */
.navbar { display: grid; grid-template-columns: 1fr auto 1fr; height: 36px; }
.nav-group { display: flex; }
.nav-group.center { align-items: center; padding-left: 18px; }
.nav-group.right { justify-content: flex-end; }
.nav-group .sep { align-self: stretch; }
.gap { margin-left: 23px; }
.field { height: 23px; border: 1px solid #5a5d5e; border-radius: 2px; }
.zoom { display: flex; width: 93px; margin-left: 2px; }
.zoom input { flex: 1; min-width: 0; padding-left: 5px; }
.zoom button { width: 15px; border-left: 1px solid #5a5d5e; }
.first-page { margin-left: 24px; }
.page-name { width: 246px; margin-left: 1px; padding: 0 3px; }

/* status bar */
.status { display: flex; align-items: center; height: 33px; padding-top: 1px; background: #1f2021; border-top: 2px solid #000; }
.status .tb { height: 30px; }
.ready { padding-left: 1px; margin-right: auto; }
.status .scale { padding-left: 3px; width: 107px; }
.status .size { width: 149px; }
.status .pos { width: 110px; }
```
